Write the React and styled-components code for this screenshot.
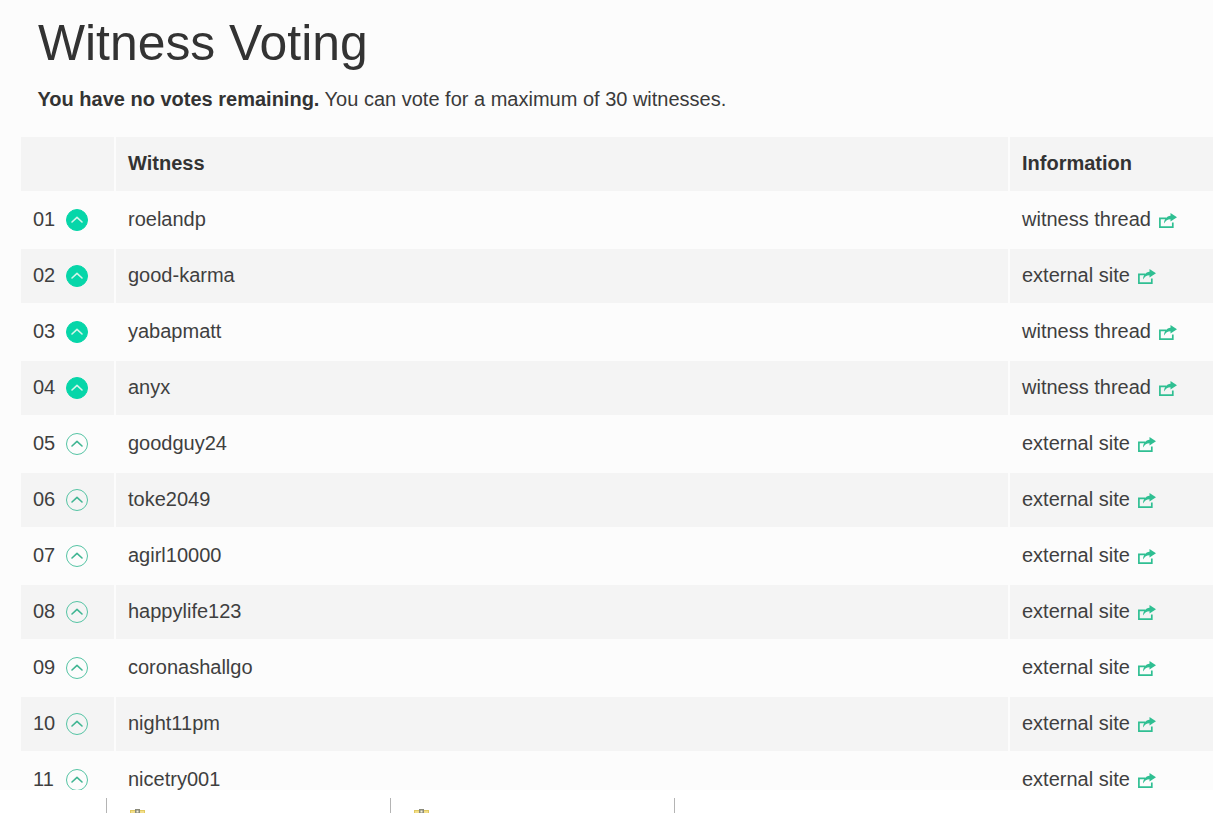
import React from 'react';
import styled, { createGlobalStyle } from 'styled-components';

const GlobalStyle = createGlobalStyle`
    html, body {
        margin: 0;
        padding: 0;
        background: #fcfcfc;
        font-family: "Liberation Sans", Arial, sans-serif;
        color: #333333;
    }
`

const Page = styled.div`
    width: 1213px;
    height: 813px;
    display: flex;
    flex-direction: column;
    overflow: hidden;
`

const Content = styled.main`
    height: 790px;
    flex: none;
    overflow: hidden;
    padding-left: 19px;
    background: #fcfcfc;
`

const Title = styled.h1`
    margin: 14px 0 0 19px;
    font-size: 49.85px;
    line-height: 58px;
    font-weight: 400;
    color: #333333;
`

const Intro = styled.p`
    margin: 12px 0 0 18.5px;
    font-size: 20px;
    line-height: 30px;
    color: #3a3a3a;

    strong {
        font-weight: 700;
        color: #333333;
    }
`

const Table = styled.table`
    margin-top: 21px;
    width: 1196px;
    border-collapse: separate;
    border-spacing: 2px;
    table-layout: fixed;
`

const Head = styled.th`
    height: 54px;
    padding: 0 12px 2px;
    box-sizing: border-box;
    background: #f4f4f4;
    text-align: left;
    font-size: 20px;
    font-weight: 700;
    color: #333333;
    width: ${p => p.$width};
`

const Row = styled.tr`
    background: ${p => p.$striped ? '#f4f4f4' : 'transparent'};
`

const Cell = styled.td`
    height: 54px;
    padding: 0 12px 2px;
    box-sizing: border-box;
    font-size: 20px;
    color: #3f3f3f;
    white-space: nowrap;
`

const RankWrap = styled.div`
    display: flex;
    align-items: center;
    gap: 11px;
`

const Rank = styled.span`
    width: 22px;
`

const VoteButton = styled.span`
    display: inline-flex;
    align-items: center;
    justify-content: center;
    width: 22px;
    height: 22px;
    margin-top: 1px;
    box-sizing: border-box;
    border-radius: 50%;
    border: 1px solid ${p => p.$voted ? '#06d6a9' : '#55c4a4'};
    background: ${p => p.$voted ? '#06d6a9' : 'transparent'};
    color: ${p => p.$voted ? '#d4f5ea' : '#3fb592'};
`

const InfoLink = styled.a`
    display: inline-flex;
    align-items: center;
    gap: 8px;
    color: #3f3f3f;
    text-decoration: none;
`

const ShareIcon = styled.svg`
    width: 18px;
    height: 15px;
    margin-top: 2px;
    color: #2fbf92;
`

const BottomBar = styled.footer`
    flex: 1;
    background: #ffffff;
    display: flex;
    padding: 8px 0 0 106px;
    overflow: hidden;
`

const Download = styled.div`
    width: 284px;
    height: 40px;
    box-sizing: border-box;
    border-left: 1px solid #b4b4b4;
    padding: 11px 0 0 23px;
`

const Chevron = () => (
    <svg width="14" height="14" viewBox="0 0 14 14" fill="none" stroke="currentColor" strokeWidth="1.6" strokeLinecap="round" strokeLinejoin="round">
        <path d="M2 9 L7 4.4 L12 9" />
    </svg>
)

const Share = () => (
    <ShareIcon viewBox="0 0 18 15" fill="none">
        <path d="M7 5.4 H0.9 V14.1 H13.8 V9.5" stroke="currentColor" strokeWidth="1.7" />
        <path d="M11.5 0 L18 4.2 L11.5 8.6 V6.2 C8.6 6.2 6.6 7.6 5 10.5 C5.2 6.4 7.6 3.2 11.5 2.8 Z" fill="currentColor" />
    </ShareIcon>
)

const FileIcon = () => (
    <svg width="16" height="16" viewBox="0 0 16 16">
        <rect x="0.5" y="1.5" width="14" height="14" fill="#f3df8a" stroke="#e0c860" />
        <rect x="5" y="0" width="5" height="5" fill="#8a8a7a" />
        <rect x="6.5" y="1.5" width="2" height="2" fill="#f7f3dc" />
    </svg>
)

const witnesses = [
    { name: 'roelandp', info: 'witness thread', voted: true },
    { name: 'good-karma', info: 'external site', voted: true },
    { name: 'yabapmatt', info: 'witness thread', voted: true },
    { name: 'anyx', info: 'witness thread', voted: true },
    { name: 'goodguy24', info: 'external site' },
    { name: 'toke2049', info: 'external site' },
    { name: 'agirl10000', info: 'external site' },
    { name: 'happylife123', info: 'external site' },
    { name: 'coronashallgo', info: 'external site' },
    { name: 'night11pm', info: 'external site' },
    { name: 'nicetry001', info: 'external site' },
]

export default function App() {
    return (
        <Page>
            <GlobalStyle />
            <Content>
                <Title>Witness Voting</Title>
                <Intro><strong>You have no votes remaining.</strong> You can vote for a maximum of 30 witnesses.</Intro>
                <Table>
                    <thead>
                        <tr>
                            <Head $width="93px" />
                            <Head>Witness</Head>
                            <Head $width="203px">Information</Head>
                        </tr>
                    </thead>
                    <tbody>
                        {witnesses.map((w, i) => (
                            <Row key={w.name} $striped={i % 2 === 1}>
                                <Cell>
                                    <RankWrap>
                                        <Rank>{String(i + 1).padStart(2, '0')}</Rank>
                                        <VoteButton $voted={w.voted}><Chevron /></VoteButton>
                                    </RankWrap>
                                </Cell>
                                <Cell>{w.name}</Cell>
                                <Cell>
                                    <InfoLink href="#">{w.info}<Share /></InfoLink>
                                </Cell>
                            </Row>
                        ))}
                    </tbody>
                </Table>
            </Content>
            <BottomBar>
                <Download><FileIcon /></Download>
                <Download><FileIcon /></Download>
                <Download />
            </BottomBar>
        </Page>
    )
}
